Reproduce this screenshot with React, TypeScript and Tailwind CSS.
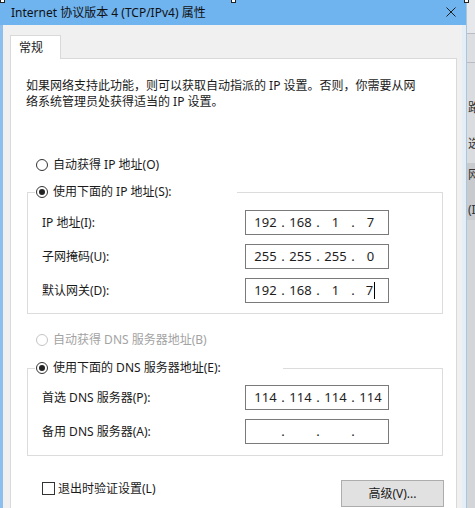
import React from "react";

const ui = "font-['Noto_Sans','Noto_Sans_CJK_SC',sans-serif]";

type RadioProps = {
  label: string;
  checked?: boolean;
  disabled?: boolean;
};

const Radio = ({ label, checked = false, disabled = false }: RadioProps) => (
  <div className="flex h-[20px] items-center gap-[5px]">
    <span
      className={
        disabled
          ? "flex h-[12px] w-[12px] items-center justify-center rounded-full border border-[#c4c4c4] bg-white"
          : "flex h-[12px] w-[12px] items-center justify-center rounded-full border border-[#333333] bg-white"
      }
    >
      {checked && <span className="h-[6px] w-[6px] rounded-full bg-[#222222]" />}
    </span>
    <span
      className={
        disabled
          ? "text-[12px] leading-[20px] text-[#a3a3a3]"
          : "text-[12px] leading-[20px] text-[#1a1a1a]"
      }
    >
      {label}
    </span>
  </div>
);

// four-part address box, each part centred in its own slot
const IpBox = ({ parts, caret = false }: { parts: string[]; caret?: boolean }) => (
  <div className="flex h-[25px] w-[144px] items-center border border-[#7a7a7a] bg-white pl-[4px] text-[13px] leading-[23px] text-[#1e1e1e]">
    {parts.map((p, i) => (
      <React.Fragment key={i}>
        <span className="flex w-[31px] items-center justify-center">
          {p}
          {caret && i === 3 && <span className="ml-[1px] inline-block h-[17px] w-px bg-black" />}
        </span>
        {i < 3 && <span className="w-[4px] text-center">.</span>}
      </React.Fragment>
    ))}
  </div>
);

const Row = ({ label, parts, caret }: { label: string; parts: string[]; caret?: boolean }) => (
  <div className="flex items-center pl-[14px]">
    <span className="w-[203px] text-[12px] leading-[16px] text-[#1a1a1a]">{label}</span>
    <IpBox parts={parts} caret={caret} />
  </div>
);

const GroupBox = ({
  legend,
  legendWidth,
  children,
  bottom,
}: {
  legend: React.ReactNode;
  legendWidth: string;
  children: React.ReactNode;
  bottom: string;
}) => (
  <fieldset className={`w-[416px] border border-[#dcdcdc] ${bottom}`}>
    <legend className={`ml-[7px] pl-[1px] ${legendWidth}`}>{legend}</legend>
    {children}
  </fieldset>
);

export default function App() {
  return (
    <div className={`relative flex h-[508px] w-[475px] overflow-hidden bg-[#d5d7db] ${ui}`}>
      {/* dialog window */}
      <div className="flex w-[466px] flex-col">
        <div className="flex h-[25px] items-center justify-between bg-[#6fb3ef] pl-[11px] pr-[10px]">
          <span className="text-[12px] leading-[16px] text-[#111111]">
            Internet 协议版本 4 (TCP/IPv4) 属性
          </span>
          <svg width="10" height="10" viewBox="0 0 10 10" className="mt-[-1px]">
            <path d="M0.5 0.5 L9.5 9.5 M9.5 0.5 L0.5 9.5" stroke="#1f1f1f" strokeWidth="1" />
          </svg>
        </div>

        <div className="flex flex-1 flex-col border-l-[3px] border-r-[4px] border-l-[#8dbfee] border-r-[#e4eef6] bg-[#f0f0f0] pl-[7px] pt-[10px]">
          {/* tab header */}
          <div className="relative z-10 mb-[-1px] flex h-[24px] w-[51px] items-center border border-b-0 border-[#d9d9d9] bg-white pl-[8px]">
            <span className="text-[12px] leading-[16px] text-[#1a1a1a]">常规</span>
          </div>

          {/* tab page */}
          <div className="flex w-[447px] flex-1 flex-col border border-b-0 border-[#d9d9d9] bg-white">
            <p className="ml-[15px] mt-[19px] text-[12px] leading-[16px] text-[#1a1a1a]">
              如果网络支持此功能，则可以获取自动指派的 IP 设置。否则，你需要从网
              <br />
              络系统管理员处获得适当的 IP 设置。
            </p>

            <div className="ml-[25px] mt-[45px]">
              <Radio label="自动获得 IP 地址(O)" />
            </div>

            <div className="ml-[16px] mt-[7px]">
              <GroupBox
                legend={<Radio label="使用下面的 IP 地址(S):" checked />}
                legendWidth="w-[202px]"
                bottom="pb-[10px]"
              >
                <div className="mt-[8px] flex flex-col gap-[9px]">
                  <Row label="IP 地址(I):" parts={["192", "168", "1", "7"]} />
                  <Row label="子网掩码(U):" parts={["255", "255", "255", "0"]} />
                  <Row label="默认网关(D):" parts={["192", "168", "1", "7"]} caret />
                </div>
              </GroupBox>
            </div>

            <div className="ml-[25px] mt-[16px]">
              <Radio label="自动获得 DNS 服务器地址(B)" disabled />
            </div>

            <div className="ml-[16px] mt-[8px]">
              <GroupBox
                legend={<Radio label="使用下面的 DNS 服务器地址(E):" checked />}
                legendWidth="w-[248px]"
                bottom="pb-[11px]"
              >
                <div className="mt-[7px] flex flex-col gap-[9px]">
                  <Row label="首选 DNS 服务器(P):" parts={["114", "114", "114", "114"]} />
                  <Row label="备用 DNS 服务器(A):" parts={["", "", "", ""]} />
                </div>
              </GroupBox>
            </div>

            <div className="ml-[16px] mt-[24px] flex w-[416px] items-start justify-between">
              <div className="ml-[15px] mt-[2px] flex h-[13px] items-center gap-[3px]">
                <span className="h-[13px] w-[13px] border border-[#333333] bg-white" />
                <span className="text-[12px] leading-[13px] text-[#1a1a1a]">退出时验证设置(L)</span>
              </div>
              <button className="mr-[-1px] flex h-[27px] w-[103px] items-center justify-center border border-[#adadad] bg-[#e1e1e1] text-[12px] leading-[16px] text-[#1a1a1a]">
                高级(V)...
              </button>
            </div>
          </div>
        </div>
      </div>

      {/* edge of the window behind */}
      <div className="flex flex-1 flex-col overflow-hidden border-l border-[#aac5dc] text-[12px] leading-[16px] text-[#333333] whitespace-nowrap">
        <div className="h-[33px] bg-[#e6e8eb]" />
        <div className="h-px bg-[#b9bdc3]" />
        <div className="h-[28px] bg-[#dcdee1]" />
        <div className="h-px bg-[#b9bdc3]" />
        <div className="h-[100px] bg-[#dadcdf] pl-px pt-[37px]">
          <div>路</div>
          <div className="mt-[20px]">选</div>
        </div>
        <div className="h-[57px] bg-[#c8cace] pl-px pt-[4px]">
          <div>网</div>
          <div className="mt-[19px]">(I</div>
        </div>
        <div className="flex-1 bg-[#d3d5d9]" />
      </div>

      {/* crop handles along the top edge */}
      <span className="absolute left-0 top-[-2px] h-[5px] w-[5px] border border-[#222222] bg-white" />
      <span className="absolute left-[231px] top-[-2px] h-[5px] w-[5px] border border-[#222222] bg-white" />
      <span className="absolute left-[464px] top-[-2px] h-[5px] w-[5px] border border-[#222222] bg-white" />
    </div>
  );
}
